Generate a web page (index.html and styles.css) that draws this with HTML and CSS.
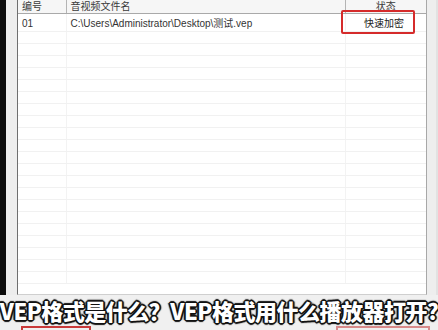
FILE: index.html
```html
<!DOCTYPE html>
<html lang="zh">
<head>
<meta charset="utf-8">
<title>VEP</title>
<link rel="stylesheet" href="styles.css">
</head>
<body>
<div class="screen">
  <div class="window">
    <div class="edge-black"></div>
    <div class="edge-gray"></div>
    <div class="list">
      <table class="grid">
        <colgroup><col class="c1"><col class="c2"><col class="c3"></colgroup>
        <thead>
          <tr><th class="h1">编号</th><th class="h2">音视频文件名</th><th class="h3">状态</th></tr>
        </thead>
        <tbody>
          <tr class="first"><td class="num">01</td><td class="path">C:\Users\Administrator\Desktop\测试.vep</td><td class="state">快速加密</td></tr>
          <tr><td></td><td></td><td></td></tr>
          <tr><td></td><td></td><td></td></tr>
          <tr><td></td><td></td><td></td></tr>
          <tr><td></td><td></td><td></td></tr>
          <tr><td></td><td></td><td></td></tr>
          <tr><td></td><td></td><td></td></tr>
          <tr><td></td><td></td><td></td></tr>
          <tr><td></td><td></td><td></td></tr>
          <tr><td></td><td></td><td></td></tr>
          <tr><td></td><td></td><td></td></tr>
          <tr><td></td><td></td><td></td></tr>
          <tr><td></td><td></td><td></td></tr>
          <tr><td></td><td></td><td></td></tr>
          <tr><td></td><td></td><td></td></tr>
          <tr><td></td><td></td><td></td></tr>
          <tr><td></td><td></td><td></td></tr>
          <tr><td></td><td></td><td></td></tr>
          <tr><td></td><td></td><td></td></tr>
          <tr><td></td><td></td><td></td></tr>
          <tr><td></td><td></td><td></td></tr>
          <tr><td></td><td></td><td></td></tr>
        </tbody>
      </table>
      <div class="mark"></div>
    </div>
    <div class="edge-right"></div>
  </div>
  <div class="caption">VEP格式是什么？VEP格式用什么播放器打开?</div>
  <div class="marks-bottom">
    <div class="mb mb1"></div>
    <div class="mb mb2"></div>
  </div>
</div>
</body>
</html>
```
FILE: styles.css
```css
html, body {
  margin: 0;
  padding: 0;
  background: #f0f0f0;
}
.screen {
  width: 438px;
  height: 330px;
  overflow: hidden;
  display: flex;
  flex-direction: column;
  background: #f0f0f0;
}
.window {
  display: flex;
  height: 295px;
  flex: 0 0 295px;
}
.edge-black {
  width: 6px;
  background: #0c0c0c;
}
.edge-gray {
  width: 11px;
  background: #ededed;
}
.list {
  position: relative;
  width: 408px;
  background: #fff;
  border-left: 1px solid #6e6e6e;
  border-right: 1px solid #a8a8a8;
  border-bottom: 1px solid #cfcfcf;
  overflow: hidden;
}
.edge-right {
  flex: 1;
  background: #eeeeee;
  border-right: 2px solid #e2e2e2;
}
.grid {
  border-collapse: collapse;
  table-layout: fixed;
  width: 408px;
  font-family: "Liberation Sans", "Noto Sans CJK SC", sans-serif;
  font-size: 10px;
  color: #333;
}
.c1 { width: 48px; }
.c2 { width: 279px; }
.c3 { width: 81px; }
.grid th {
  height: 13px;
  padding: 0 0 0 4px;
  font-weight: normal;
  text-align: left;
  background: #f6f6f6;
  border-bottom: 1px solid #a9a9a9;
  border-right: 1px solid #b4b4b4;
  color: #3a3a3a;
  line-height: 13px;
  vertical-align: bottom;
}
.grid th.h3 {
  text-align: center;
  border-right: none;
  padding: 0;
}
.grid td {
  height: 11px;
  padding: 0 0 0 4px;
  border-bottom: 1px solid #f1f1f1;
  border-right: 1px solid #f3f3f3;
  line-height: 11px;
  white-space: nowrap;
}
.grid td:last-child { border-right: none; }
.grid tr.first td {
  height: 14px;
  line-height: 14px;
  padding-top: 3px;
}
.grid td.state {
  text-align: right;
  padding-right: 22px;
  color: #222;
}
.mark {
  position: absolute;
  left: 323px;
  top: 10px;
  width: 70px;
  height: 20px;
  border: 2px solid #d52b2b;
  border-radius: 2px;
}
.caption {
  flex: 0 0 auto;
  height: 31px;
  display: flex;
  justify-content: center;
  white-space: nowrap;
  font-family: "Noto Sans CJK SC", sans-serif;
  font-weight: 900;
  font-size: 22px;
  line-height: 31px;
  color: #fff;
  letter-spacing: -0.5px;
  text-shadow:
    1px 0 0 #111, -1px 0 0 #111, 0 1px 0 #111, 0 -1px 0 #111,
    1px 1px 0 #111, -1px -1px 0 #111, 1px -1px 0 #111, -1px 1px 0 #111,
    2px 0 1px #111, -2px 0 1px #111, 0 2px 1px #111, 0 -2px 1px #111;
}
.marks-bottom {
  display: flex;
  height: 4px;
  padding-left: 21px;
  gap: 245px;
}
.mb {
  border-top: 2px solid #c93a3a;
  border-left: 2px solid #c93a3a;
  border-right: 2px solid #c93a3a;
  height: 4px;
}
.mb1 { width: 66px; }
.mb2 { width: 90px; border-color: #d88a8a; }
```
